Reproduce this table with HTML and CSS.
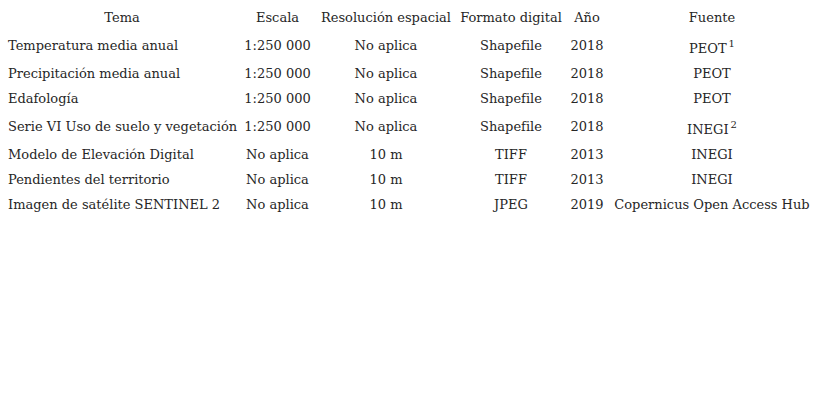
FILE: index.html
```html
<!DOCTYPE html>
<html lang="es">
<head>
<meta charset="utf-8">
<title>Tabla de insumos</title>
<link rel="stylesheet" href="styles.css">
</head>
<body>
<table class="data">
  <colgroup>
    <col class="c-tema">
    <col class="c-escala">
    <col class="c-res">
    <col class="c-formato">
    <col class="c-anio">
    <col class="c-fuente">
  </colgroup>
  <thead>
    <tr>
      <th>Tema</th>
      <th>Escala</th>
      <th>Resolución espacial</th>
      <th>Formato digital</th>
      <th>Año</th>
      <th>Fuente</th>
    </tr>
  </thead>
  <tbody>
    <tr>
      <td class="left">Temperatura media anual</td>
      <td>1:250 000</td>
      <td>No aplica</td>
      <td>Shapefile</td>
      <td>2018</td>
      <td>PEOT<sup>1</sup></td>
    </tr>
    <tr>
      <td class="left">Precipitación media anual</td>
      <td>1:250 000</td>
      <td>No aplica</td>
      <td>Shapefile</td>
      <td>2018</td>
      <td>PEOT</td>
    </tr>
    <tr>
      <td class="left">Edafología</td>
      <td>1:250 000</td>
      <td>No aplica</td>
      <td>Shapefile</td>
      <td>2018</td>
      <td>PEOT</td>
    </tr>
    <tr>
      <td class="left">Serie VI Uso de suelo y vegetación</td>
      <td>1:250 000</td>
      <td>No aplica</td>
      <td>Shapefile</td>
      <td>2018</td>
      <td>INEGI<sup>2</sup></td>
    </tr>
    <tr>
      <td class="left">Modelo de Elevación Digital</td>
      <td>No aplica</td>
      <td>10 m</td>
      <td>TIFF</td>
      <td>2013</td>
      <td>INEGI</td>
    </tr>
    <tr>
      <td class="left">Pendientes del territorio</td>
      <td>No aplica</td>
      <td>10 m</td>
      <td>TIFF</td>
      <td>2013</td>
      <td>INEGI</td>
    </tr>
    <tr>
      <td class="left">Imagen de satélite SENTINEL 2</td>
      <td>No aplica</td>
      <td>10 m</td>
      <td>JPEG</td>
      <td>2019</td>
      <td>Copernicus Open Access Hub</td>
    </tr>
  </tbody>
</table>
</body>
</html>
```

FILE: styles.css
```css
html, body {
  margin: 0;
  padding: 0;
  background: #ffffff;
}

body {
  font-family: "DejaVu Serif", "Liberation Serif", serif;
  font-size: 13px;
  color: #262626;
}

.data {
  margin: 5px 0 0 5px;
  border-collapse: collapse;
  border-spacing: 0;
  table-layout: fixed;
  width: 811px;
}

.c-tema { width: 234px; }
.c-escala { width: 77px; }
.c-res { width: 140px; }
.c-formato { width: 110px; }
.c-anio { width: 42px; }
.c-fuente { width: 208px; }

.data th,
.data td {
  font-weight: normal;
  text-align: center;
  vertical-align: middle;
  white-space: nowrap;
  padding: 4px 3px;
  line-height: 17px;
  height: 17px;
}

.data td.left {
  text-align: left;
}

.data sup {
  font-size: 10px;
  line-height: 19px;
  vertical-align: 6px;
  margin-left: 2px;
}
```
